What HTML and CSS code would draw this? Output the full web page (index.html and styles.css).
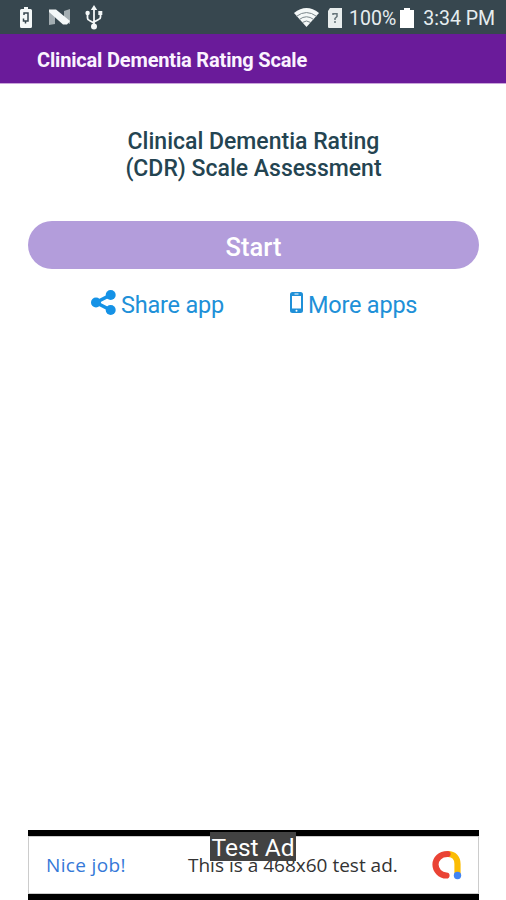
FILE: index.html
```html
<!DOCTYPE html>
<html lang="en">
<head>
  <meta charset="UTF-8" />
  <meta name="viewport" content="width=device-width, initial-scale=1" />
  <title>Clinical Dementia Rating Scale</title>
  <link rel="stylesheet" href="styles.css">
</head>
<body>
  <div class="status-bar">
    <div class="status-left">
      <svg class="icon-saver" width="12" height="21" viewBox="0 0 12 21">
        <path fill="#f4f8f8" d="M4 0h4v2h2.500q1.500 0 1.500 1.500v16q0 1.500-1.500 1.500h-9q-1.500 0-1.500-1.500v-16q0-1.500 1.500-1.500H4z"/>
        <path fill="none" stroke="#37474f" stroke-width="1.500" d="M4 8V6h4v8H5.500v2.500M3.500 11.500v2.500h2"/>
      </svg>
      <svg class="icon-n" width="22" height="18" viewBox="0 0 22 18">
        <path fill="#a3adb1" d="M0 2l6 4v10l-6 1zM15 3l6-2v15l-6-3z"/>
        <path fill="#f4f8f8" d="M0 1.500h7L21 13l-3 3.500h-4L0 4z"/>
      </svg>
      <svg class="icon-usb" width="18" height="25" viewBox="0 0 18 25">
        <path fill="none" stroke="#f4f8f8" stroke-width="1.800" d="M9 3v19M2.500 8v5q0 2 2 2.500L9 18M15.500 8v4q0 2-2 2.500L9 17"/>
        <path fill="#f4f8f8" d="M9 0l3.200 5H5.800zM13.300 6h4v4h-4z"/>
        <circle fill="#f4f8f8" cx="2.600" cy="8" r="2.200"/>
        <circle fill="#f4f8f8" cx="9" cy="21.500" r="3"/>
      </svg>
    </div>
    <div class="status-right">
      <svg class="icon-wifi" width="25" height="19" viewBox="0 0 25 19">
        <path fill="#f4f8f8" d="M0 5Q12.500-5 25 5L12.500 19z"/>
        <path fill="none" stroke="#7b878c" stroke-width="1" d="M2.500 8.300q10-7.500 20 0M5.300 11.500q7.200-5.500 14.400 0M8.300 14.500q4.200-3 8.400 0"/>
      </svg>
      <svg class="icon-sim" width="15" height="20" viewBox="0 0 15 20">
        <path fill="#e8eded" d="M3 0h12v20H2q-1 0-1-1V3z"/>
        <path fill="none" stroke="#65747a" stroke-width="1.500" d="M6 7V5.700h4v2.800L8 10.500V12M8 13v2"/>
      </svg>
      <span class="percent">100%</span>
      <svg class="icon-battery" width="14" height="20" viewBox="0 0 14 20">
        <path fill="#fff" d="M4 0h6v2h4v18H0V2h4z"/>
      </svg>
      <span class="clock">3:34 PM</span>
    </div>
  </div>
  <header class="app-bar">
    <span class="app-title">Clinical Dementia Rating Scale</span>
  </header>
  <main class="content">
    <h1>Clinical Dementia Rating<br><span>(CDR) Scale Assessment</span></h1>
    <button class="start">Start</button>
    <nav class="links">
      <a class="share">
        <svg width="25" height="25" viewBox="0 0 25 25">
          <path fill="none" stroke="#1592e6" stroke-width="3.600" d="M19.500 5L5 12.500l14.500 7.500"/>
          <circle fill="#1592e6" cx="19.700" cy="5" r="5"/>
          <circle fill="#1592e6" cx="5" cy="12.500" r="5"/>
          <circle fill="#1592e6" cx="19.700" cy="20" r="5"/>
        </svg>
        <span>Share app</span>
      </a>
      <a class="more">
        <svg width="13" height="21" viewBox="0 0 13 21">
          <path fill="#1f90d8" fill-rule="evenodd" d="M2.500 0h8Q13 0 13 2.500v16q0 2.500-2.500 2.500h-8Q0 21 0 18.500v-16Q0 0 2.500 0zM2 4v12.500h9V4zM4.500 1.500v1h4v-1z"/>
          <circle fill="#fff" cx="6.500" cy="18.700" r="1"/>
        </svg>
        <span>More apps</span>
      </a>
    </nav>
  </main>
  <footer class="ad">
    <div class="ad-body">
      <span class="ad-job">Nice job!</span>
      <span class="ad-text">This is a 468x60 test ad.</span>
      <svg class="ad-logo" width="30" height="30" viewBox="0 0 30 30">
        <g fill="none" stroke-width="6.200" stroke-linecap="round">
          <path stroke="#fbbc04" stroke-linecap="butt" d="M16 4c6 0 9.500 4 9.500 10v11"/>
          <path stroke="#ea4335" d="M15.500 4C8 4 3.500 9 3.500 14.500S8 25.500 14.500 25.500"/>
        </g>
        <circle fill="#4285f4" cx="25.500" cy="25.500" r="3.700"/>
      </svg>
    </div>
    <span class="ad-label">Test Ad</span>
  </footer>
</body>
</html>
```
FILE: styles.css
```css
* {
  box-sizing: border-box;
}
body {
  margin: 0;
  height: 100vh;
  display: flex;
  flex-direction: column;
  font-family: Roboto, sans-serif;
  background-color: #fff;
  overflow: hidden;
}
svg {
  display: block;
  flex: none;
}
span {
  white-space: nowrap;
}
.status-bar {
  height: 34px;
  flex: none;
  padding: 0 11px 0 20px;
  display: flex;
  justify-content: space-between;
  background-color: #37474f;
  color: #e6edef;
  font-size: 19.5px;
  line-height: 37px;
}
.status-left, .status-right {
  display: flex;
}
.icon-saver {
  margin-top: 7px;
}
.icon-n {
  margin: 8px 0 0 17px;
}
.icon-usb {
  margin: 5px 0 0 14px;
}
.icon-wifi {
  margin: 8px 8px 0 0;
}
.icon-sim {
  margin: 8px 7px 0 0;
}
.icon-battery {
  margin: 8px 9px 0 4px;
}
.app-bar {
  height: 50px;
  flex: none;
  padding-left: 37px;
  background-color: #6a1b9a;
  border-bottom: 1px solid #c9a5da;
  color: #fbf3ff;
  font-size: 20px;
  font-weight: 700;
  line-height: 53px;
  letter-spacing: -0.17px;
}
.content {
  flex: 1;
  padding: 44px 27px 0 28px;
}
h1 {
  margin: 0;
  color: #244451;
  font-size: 23px;
  font-weight: 500;
  line-height: 27px;
  text-align: center;
}
.start {
  display: block;
  width: 100%;
  height: 48px;
  margin-top: 39px;
  padding: 4px 0 0;
  border: none;
  border-radius: 24px;
  background-color: #b39ddb;
  color: #fff;
  font-family: inherit;
  font-size: 25.5px;
  font-weight: 500;
}
.links {
  display: flex;
  padding: 21px 0 0 63px;
  color: #2090d8;
  font-size: 23.5px;
  line-height: 30px;
  letter-spacing: -0.22px;
}
.links a {
  display: flex;
}
.share {
  width: 199px;
  gap: 5px;
}
.more {
  gap: 5px;
}
.more svg {
  margin-top: 2px;
}
.ad {
  position: relative;
  height: 70px;
  flex: none;
  margin: 0 27px 0 28px;
  padding: 6px 0;
  background-color: #000;
}
.ad-body {
  height: 58px;
  padding: 0 16px 0 17px;
  border: 1px solid #ccc;
  background-color: #fff;
  display: flex;
  align-items: center;
  font-family: "Open Sans", sans-serif;
  font-size: 19px;
}
.ad-job {
  width: 142px;
  color: #3579d8;
  letter-spacing: 0.35px;
}
.ad-text {
  color: #333;
}
.ad-logo {
  margin-left: auto;
}
.ad-label {
  position: absolute;
  left: 182px;
  top: 2px;
  width: 86px;
  height: 29px;
  background-color: #424242;
  color: #fff;
  font-size: 24.5px;
  line-height: 32px;
  text-align: center;
}
```
